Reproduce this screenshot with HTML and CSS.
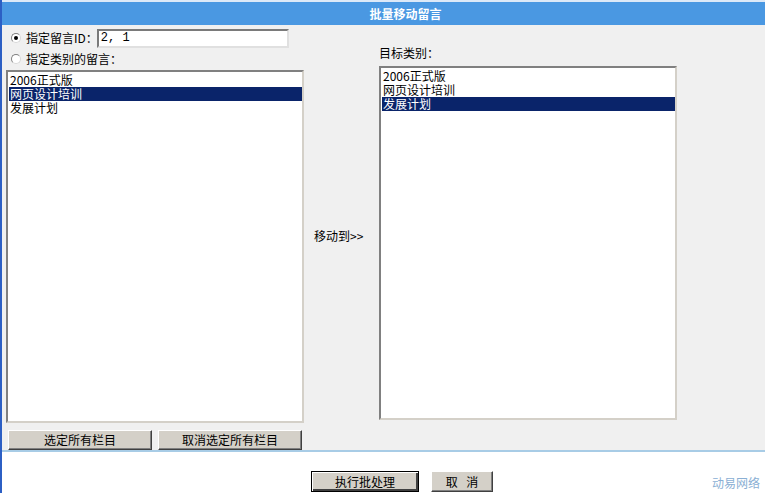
FILE: index.html
```html
<!DOCTYPE html>
<html lang="zh-CN">
  <head>
    <meta charset="UTF-8" />
    <title>批量移动留言</title>
    <link rel="stylesheet" href="styles.css">
  </head>
  <body>
    <div id="container">
      <div class="title">批量移动留言</div>
      <div class="panel">
        <div class="col">
          <div class="row">
            <span class="radio checked"></span>
            <span class="label">指定留言ID：</span>
            <span class="textbox">2, 1</span>
          </div>
          <div class="row">
            <span class="radio"></span>
            <span class="label">指定类别的留言：</span>
          </div>
          <div class="listbox left">
            <div class="item">2006正式版</div>
            <div class="item selected">网页设计培训</div>
            <div class="item">发展计划</div>
          </div>
          <div class="btns">
            <button class="btn wide">选定所有栏目</button>
            <button class="btn wide">取消选定所有栏目</button>
          </div>
        </div>
        <div class="middle">移动到&gt;&gt;</div>
        <div class="col">
          <div class="target-label">目标类别：</div>
          <div class="listbox right">
            <div class="item">2006正式版</div>
            <div class="item">网页设计培训</div>
            <div class="item selected">发展计划</div>
          </div>
        </div>
      </div>
      <div class="footer">
        <button class="btn submit">执行批处理</button>
        <button class="btn cancel">取 消</button>
        <span class="brand">动易网络</span>
      </div>
    </div>
  </body>
</html>
```

FILE: styles.css
```css
* {
  margin: 0;
  padding: 0;
  box-sizing: border-box;
}
body {
  font-family: "Noto Sans CJK SC", "DejaVu Sans", sans-serif;
  font-size: 12px;
  color: #000;
  background: #fff;
}
#container {
  width: 765px;
  height: 493px;
  border-left: 2px solid #2c5fc4;
  overflow: hidden;
}
.title {
  height: 25px;
  border-top: 2px solid #dce9f8;
  background: #4a98e2;
  color: #fff;
  font-weight: bold;
  text-align: center;
  line-height: 23px;
  padding-left: 44px;
}
.panel {
  display: flex;
  height: 427px;
  padding: 3px 0 0 4px;
  background: #f0f0f0;
  border-bottom: 2px solid #a8cce6;
}
.col {
  width: 298px;
  display: flex;
  flex-direction: column;
}
.row {
  display: flex;
  align-items: center;
  height: 20px;
}
.row + .row {
  height: 21px;
}
.radio {
  width: 10px;
  height: 10px;
  margin: 0 5px 0 5px;
  border-radius: 50%;
  border: 1px solid #808080;
  border-right-color: #d8d8d8;
  border-bottom-color: #d8d8d8;
  background: #fff;
  position: relative;
}
.radio.checked::after {
  content: "";
  position: absolute;
  left: 2px;
  top: 2px;
  width: 4px;
  height: 4px;
  border-radius: 50%;
  background: #000;
}
.label {
  line-height: 14px;
}
.textbox {
  width: 192px;
  height: 19px;
  margin-left: -1px;
  padding-left: 2px;
  border: 2px solid #7a7a7a;
  border-right-color: #e0e0e0;
  border-bottom-color: #e0e0e0;
  background: #fff;
  line-height: 15px;
  font-family: "Liberation Mono", "Noto Sans CJK SC", monospace;
}
.listbox {
  background: #fff;
  border: 2px solid #808080;
  border-right-color: #d4d0c8;
  border-bottom-color: #d4d0c8;
  padding: 1px 0 0 1px;
}
.listbox.left {
  height: 353px;
  margin-top: 1px;
}
.listbox.right {
  height: 354px;
  margin-top: 2px;
}
.item {
  height: 14px;
  line-height: 14px;
  padding-left: 1px;
  white-space: nowrap;
}
.item.selected {
  background: #0a246a;
  color: #fff;
}
.btns {
  display: flex;
  justify-content: space-between;
  padding: 7px 2px 0 2px;
}
.btn {
  font-family: inherit;
  font-size: 12px;
  height: 20px;
  line-height: 14px;
  background: #d4d0c8;
  color: #000;
  border: 1px solid;
  border-color: #ffffff #404040 #404040 #ffffff;
  box-shadow: inset -1px -1px 0 #808080;
}
.btn.wide {
  width: 144px;
}
.middle {
  width: 75px;
  display: flex;
  align-items: center;
  padding: 0 0 8px 10px;
}
.target-label {
  height: 19px;
  margin-top: 17px;
  line-height: 16px;
}
.footer {
  display: flex;
  align-items: flex-end;
  height: 40px;
  padding-left: 309px;
}
.btn.submit {
  width: 108px;
  height: 21px;
  border: 1px solid #000;
  box-shadow: inset 1px 1px 0 #fff, inset -2px -2px 0 #404040;
}
.btn.cancel {
  width: 62px;
  height: 21px;
  margin-left: 12px;
  word-spacing: 6px;
}
.brand {
  margin-left: auto;
  margin-right: 5px;
  margin-bottom: 1px;
  color: #8aafd4;
  font-size: 12px;
}
```
